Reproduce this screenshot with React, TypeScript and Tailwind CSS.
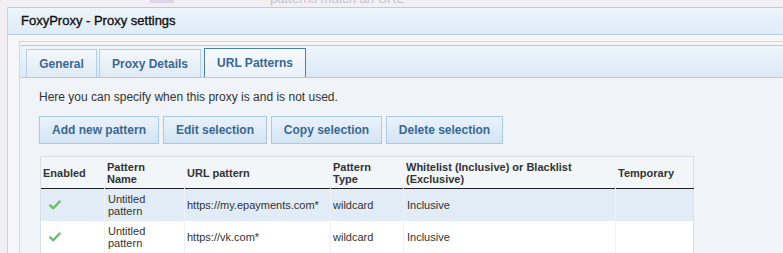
import React from "react";

const font = "font-['Liberation_Sans',Arial,sans-serif]";

const tabs = [
  { label: "General", width: "w-[71px]", active: false },
  { label: "Proxy Details", width: "w-[102px]", active: false },
  { label: "URL Patterns", width: "w-[102px]", active: true },
];

const buttons = [
  { label: "Add new pattern", width: "w-[120px]" },
  { label: "Edit selection", width: "w-[104px]" },
  { label: "Copy selection", width: "w-[111px]" },
  { label: "Delete selection", width: "w-[117px]" },
];

const columns = [
  { title: ["Enabled"], width: "w-[64px]" },
  { title: ["Pattern", "Name"], width: "w-[80px]" },
  { title: ["URL pattern"], width: "w-[146px]" },
  { title: ["Pattern", "Type"], width: "w-[73px]" },
  { title: ["Whitelist (Inclusive) or Blacklist", "(Exclusive)"], width: "w-[212px]" },
  { title: ["Temporary"], width: "w-[79px]" },
];

const rows = [
  { url: "https://my.epayments.com*", selected: true },
  { url: "https://vk.com*", selected: false },
];

function Check() {
  return (
    <svg width="12" height="10" viewBox="0 0 12 10" className="ml-[6px]">
      <path
        d="M1.2 5.4 L4.3 8.3 L10.6 1.6"
        fill="none"
        stroke="#70bb6c"
        strokeWidth="2.4"
        strokeLinecap="round"
        strokeLinejoin="round"
      />
    </svg>
  );
}

export default function App() {
  return (
    <div className={`w-[783px] h-[253px] overflow-hidden bg-[#f2f0f2] flex flex-col ${font}`}>
      {/* page behind the dialog */}
      <div className="h-[7px] shrink-0 flex overflow-hidden">
        <div className="ml-[150px] w-[24px] h-[3px] bg-[#ddd5ec]" />
        <span className="ml-[96px] -mt-[8px] text-[13px] leading-[14px] text-[#c3c3cf]">
          patterns match an URL
        </span>
      </div>

      <div className="flex flex-1 min-h-0">
        <div className="w-[7px] shrink-0" />

        <div className="flex-1 flex flex-col border-l border-[#c3d4e3] bg-[#f5f6f8]">
          <header className="h-[28px] shrink-0 flex items-center pl-[13px] border-y border-[#b7cde1] bg-gradient-to-b from-[#eef5fc] to-[#dfebf6]">
            <h3 className="text-[13px] text-[#111] [-webkit-text-stroke:0.35px_#111]">
              FoxyProxy - Proxy settings
            </h3>
          </header>

          <div className="flex-1 pl-[11px] pt-[6px] min-h-0 flex flex-col">
            <section className="flex-1 flex flex-col border-l border-t border-[#d3d9df] pt-[3px] min-h-0">
              <nav className="h-[33px] shrink-0 flex items-end pl-[6px] border-y border-[#b5cbe0] bg-gradient-to-b from-[#eef5fc] to-[#dce9f5]">
                {tabs.map((tab, i) => (
                  <button
                    key={tab.label}
                    className={`${tab.width} ${i === 1 ? "ml-[2px]" : ""} ${i === 2 ? "ml-[3px]" : ""} ${
                      tab.active
                        ? "h-[29px] border-[#4b80aa] bg-gradient-to-b from-[#f6fafd] to-[#e9f1f9]"
                        : "h-[28px] border-[#b8cfe3] bg-gradient-to-b from-[#f4f8fc] to-[#dfeaf5]"
                    } border border-b-0 text-[12px] font-bold text-[#3a6892] flex items-center justify-center`}
                  >
                    {tab.label}
                  </button>
                ))}
              </nav>

              <div className="flex-1 bg-[#f0f3f7] pl-[19px] pt-[12px] min-h-0">
                <p className="text-[12px] leading-[14px] text-[#333]">
                  Here you can specify when this proxy is and is not used.
                </p>

                <div className="flex gap-[4px] mt-[12px]">
                  {buttons.map((b) => (
                    <button
                      key={b.label}
                      className={`${b.width} h-[28px] border border-[#abc9e3] bg-gradient-to-b from-[#eaf3fb] to-[#d3e4f3] text-[12px] font-bold text-[#3a6892]`}
                    >
                      {b.label}
                    </button>
                  ))}
                </div>

                <div className="ml-[1px] mt-[12px] w-[654px] border border-b-0 border-[#d9e0e7] bg-white">
                  <div className="flex h-[32px] bg-[#f3f6f9]">
                    {columns.map((c) => (
                      <div key={c.title.join()} className={`${c.width} shrink-0 pr-px flex`}>
                        <div className="flex-1 flex flex-col justify-center pl-[2px] border-b border-[#1e1e1e] text-[11px] leading-[12px] font-bold text-[#333]">
                          {c.title.map((t) => (
                            <span key={t}>{t}</span>
                          ))}
                        </div>
                      </div>
                    ))}
                  </div>

                  {rows.map((r) => (
                    <div
                      key={r.url}
                      className={`flex h-[32px] text-[11px] leading-[12px] text-[#333] ${
                        r.selected ? "bg-[#e1ecf7]" : "bg-white"
                      }`}
                    >
                      <div className="w-[64px] shrink-0 border-r border-[#eef2f6] flex items-center pl-[2px]">
                        <Check />
                      </div>
                      <div className="w-[80px] shrink-0 border-r border-[#eef2f6] flex flex-col justify-center pl-[3px]">
                        <span>Untitled</span>
                        <span>pattern</span>
                      </div>
                      <div className="w-[146px] shrink-0 border-r border-[#eef2f6] flex items-center pl-[2px]">
                        {r.url}
                      </div>
                      <div className="w-[73px] shrink-0 border-r border-[#eef2f6] flex items-center pl-[2px]">
                        wildcard
                      </div>
                      <div className="w-[212px] shrink-0 border-r border-[#eef2f6] flex items-center pl-[3px]">
                        Inclusive
                      </div>
                      <div className="w-[79px] shrink-0" />
                    </div>
                  ))}
                </div>
              </div>
            </section>
          </div>
        </div>
      </div>
    </div>
  );
}
